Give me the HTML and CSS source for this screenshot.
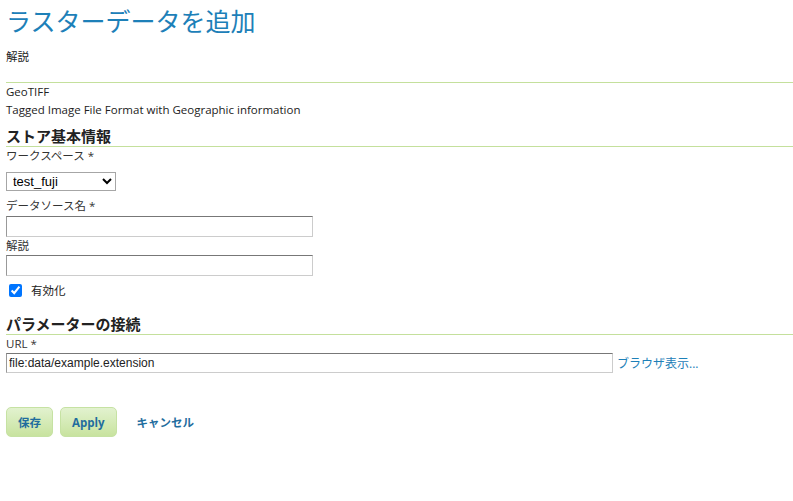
FILE: index.html
```html
<!DOCTYPE html>
<html lang="ja">
<head>
<meta charset="utf-8">
<link rel="stylesheet" href="styles.css">
</head>
<body>
<div class="page">
  <h1 class="title">ラスターデータを追加</h1>
  <p class="desc">解説</p>
  <div class="rule"></div>
  <div class="info">
    <div>GeoTIFF</div>
    <div>Tagged Image File Format with Geographic information</div>
  </div>
  <h3 class="section">ストア基本情報</h3>
  <div class="field">
    <label class="lbl">ワークスペース *</label>
    <div class="selectwrap">
      <select class="sel"><option>test_fuji</option></select>
    </div>
  </div>
  <div class="field">
    <label class="lbl">データソース名 *</label>
    <input class="txt first" type="text">
  </div>
  <div class="field">
    <label class="lbl">解説</label>
    <input class="txt" type="text">
  </div>
  <div class="check">
    <input type="checkbox" checked class="cb">
    <span>有効化</span>
  </div>
  <h3 class="section sec2">パラメーターの接続</h3>
  <div class="field">
    <label class="lbl">URL *</label>
    <div class="urlrow">
      <input class="txt url" type="text" value="file:data/example.extension">
      <a class="browse" href="#">ブラウザ表示...</a>
    </div>
  </div>
  <div class="buttons">
    <button class="btn">保存</button>
    <button class="btn">Apply</button>
    <a class="cancel" href="#">キャンセル</a>
  </div>
</div>
</body>
</html>
```

FILE: styles.css
```css
html, body {
  margin: 0;
  padding: 0;
  background: #fff;
}
.page {
  padding: 0 0 0 6px;
  font-family: "Open Sans", "Noto Sans CJK JP", sans-serif;
  font-size: 11.5px;
  color: #222;
}
.title {
  margin: 0;
  padding-top: 4px;
  font-size: 25px;
  font-weight: normal;
  color: #1d80b8;
  line-height: 34px;
  height: 36px;
}
.desc {
  margin: 0;
  margin-top: 9px;
  line-height: 16px;
}
.rule {
  border-top: 1px solid #c4e09c;
  margin-top: 17px;
}
.info {
  margin-top: 0;
  line-height: 18px;
}
.section {
  margin: 0;
  margin-top: 7px;
  font-size: 15px;
  font-weight: bold;
  line-height: 20px;
  color: #222;
  border-bottom: 1px solid #c4e09c;
}
.field {
  display: flex;
  flex-direction: column;
  align-items: flex-start;
}
.lbl {
  line-height: 18px;
  color: #333;
}
.selectwrap {
  margin-top: 7px;
  margin-bottom: 6px;
  line-height: 0;
}
.sel {
  width: 110px;
  height: 19px;
  font-family: "Liberation Sans", Arial, sans-serif;
  font-size: 13px;
  border: 1px solid #a6a6a6;
  border-radius: 0;
  background: #fff;
  color: #000;
  padding: 0 2px;
  margin: 0;
}
.txt {
  box-sizing: border-box;
  width: 307px;
  height: 21px;
  border: 1px solid #ccc;
  border-top-color: #777;
  border-left-color: #999;
  margin: 0;
  padding: 1px 2px;
  font-family: "Liberation Sans", Arial, sans-serif;
  font-size: 12px;
}
.txt.first {
  margin-top: 1px;
}
.check {
  display: flex;
  align-items: center;
  height: 20px;
  margin-top: 4px;
}
.cb {
  margin: 0 9px 0 3px;
  width: 13px;
  height: 13px;
  accent-color: #0075ff;
}
.sec2 {
  margin-top: 14px;
}
.urlrow {
  display: flex;
  align-items: center;
  gap: 4px;
}
.txt.url {
  width: 607px;
  height: 20px;
  font-size: 12px;
  color: #222;
}
.browse {
  color: #1d80b8;
  text-decoration: none;
  font-size: 12px;
}
.buttons {
  display: flex;
  align-items: center;
  margin-top: 34px;
  gap: 7px;
}
.btn {
  height: 30px;
  padding: 0 11px;
  border: 1px solid #c6e2a3;
  border-radius: 5px;
  background: linear-gradient(#e2f2cf, #c8e39f);
  color: #1f6d9e;
  font-family: "Open Sans", "Noto Sans CJK JP", sans-serif;
  font-weight: bold;
  font-size: 11.5px;
}
.cancel {
  margin-left: 13px;
  color: #1f6d9e;
  font-weight: bold;
  text-decoration: none;
}
```
